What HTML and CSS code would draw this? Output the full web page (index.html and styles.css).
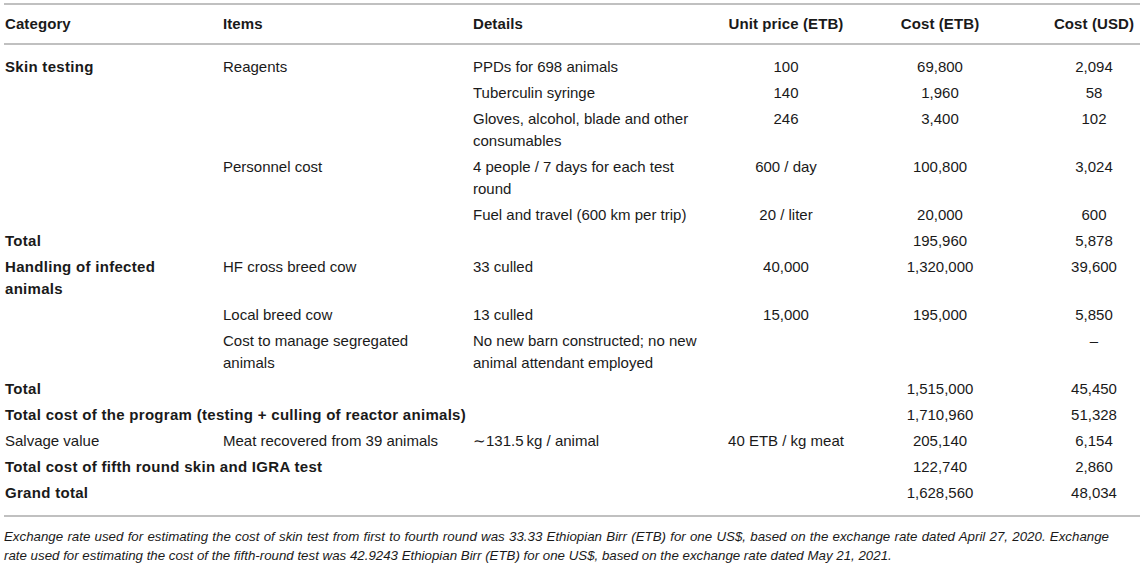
FILE: index.html
```html
<!DOCTYPE html>
<html lang="en">
    <head>
        <meta charset="UTF-8">
        <meta name="viewport" content="width=device-width, initial-scale=1.0">
        <title>Cost of the test and slaughter program</title>
        <link rel="stylesheet" href="styles.css">
    </head>
    <body>
        <div class="wrap">
            <table class="costs">
                <colgroup>
                    <col class="c-cat">
                    <col class="c-item">
                    <col class="c-detail">
                    <col class="c-unit">
                    <col class="c-etb">
                    <col class="c-usd">
                </colgroup>
                <thead>
                    <tr>
                        <th>Category</th>
                        <th>Items</th>
                        <th>Details</th>
                        <th class="num">Unit price (ETB)</th>
                        <th class="num">Cost (ETB)</th>
                        <th class="num usd">Cost (USD)</th>
                    </tr>
                </thead>
                <tbody>
                    <tr>
                        <td class="cat">Skin testing</td>
                        <td>Reagents</td>
                        <td>PPDs for 698 animals</td>
                        <td class="num">100</td>
                        <td class="num">69,800</td>
                        <td class="num usd">2,094</td>
                    </tr>
                    <tr>
                        <td></td>
                        <td></td>
                        <td>Tuberculin syringe</td>
                        <td class="num">140</td>
                        <td class="num">1,960</td>
                        <td class="num usd">58</td>
                    </tr>
                    <tr>
                        <td></td>
                        <td></td>
                        <td>Gloves, alcohol, blade and other consumables</td>
                        <td class="num">246</td>
                        <td class="num">3,400</td>
                        <td class="num usd">102</td>
                    </tr>
                    <tr>
                        <td></td>
                        <td>Personnel cost</td>
                        <td>4 people / 7 days for each test round</td>
                        <td class="num">600 / day</td>
                        <td class="num">100,800</td>
                        <td class="num usd">3,024</td>
                    </tr>
                    <tr>
                        <td></td>
                        <td></td>
                        <td>Fuel and travel (600 km per trip)</td>
                        <td class="num">20 / liter</td>
                        <td class="num">20,000</td>
                        <td class="num usd">600</td>
                    </tr>
                    <tr>
                        <td class="cat">Total</td>
                        <td></td>
                        <td></td>
                        <td></td>
                        <td class="num">195,960</td>
                        <td class="num usd">5,878</td>
                    </tr>
                    <tr>
                        <td class="cat">Handling of infected animals</td>
                        <td>HF cross breed cow</td>
                        <td>33 culled</td>
                        <td class="num">40,000</td>
                        <td class="num">1,320,000</td>
                        <td class="num usd">39,600</td>
                    </tr>
                    <tr>
                        <td></td>
                        <td>Local breed cow</td>
                        <td>13 culled</td>
                        <td class="num">15,000</td>
                        <td class="num">195,000</td>
                        <td class="num usd">5,850</td>
                    </tr>
                    <tr>
                        <td></td>
                        <td>Cost to manage segregated animals</td>
                        <td>No new barn constructed; no new animal attendant employed</td>
                        <td class="num"></td>
                        <td class="num"></td>
                        <td class="num usd">&ndash;</td>
                    </tr>
                    <tr>
                        <td class="cat">Total</td>
                        <td></td>
                        <td></td>
                        <td></td>
                        <td class="num">1,515,000</td>
                        <td class="num usd">45,450</td>
                    </tr>
                    <tr>
                        <td class="cat" colspan="3">Total cost of the program (testing + culling of reactor animals)</td>
                        <td></td>
                        <td class="num">1,710,960</td>
                        <td class="num usd">51,328</td>
                    </tr>
                    <tr>
                        <td>Salvage value</td>
                        <td>Meat recovered from 39 animals</td>
                        <td>&sim;131.5&#8201;kg / animal</td>
                        <td class="num">40 ETB / kg meat</td>
                        <td class="num">205,140</td>
                        <td class="num usd">6,154</td>
                    </tr>
                    <tr>
                        <td class="cat" colspan="3">Total cost of fifth round skin and IGRA test</td>
                        <td></td>
                        <td class="num">122,740</td>
                        <td class="num usd">2,860</td>
                    </tr>
                    <tr>
                        <td class="cat">Grand total</td>
                        <td></td>
                        <td></td>
                        <td></td>
                        <td class="num">1,628,560</td>
                        <td class="num usd">48,034</td>
                    </tr>
                </tbody>
            </table>

            <p class="note">Exchange rate used for estimating the cost of skin test from first to fourth round was 33.33 Ethiopian Birr (ETB) for one US$, based on the exchange rate dated April 27, 2020. Exchange rate used for estimating the cost of the fifth-round test was 42.9243 Ethiopian Birr (ETB) for one US$, based on the exchange rate dated May 21, 2021.</p>
        </div>
    </body>
</html>
```

FILE: styles.css
```css
* {
    box-sizing: border-box;
}

body {
    margin: 0;
    background: #fff;
    color: #1a1a1a;
    font-family: "Liberation Sans", Arial, sans-serif;
}

.wrap {
    width: 1136px;
    margin: 3px 0 0 4px;
}

table.costs {
    width: 1136px;
    table-layout: fixed;
    border-collapse: collapse;
    border-top: 2px solid #c0c0c0;
    border-bottom: 2px solid #c0c0c0;
    font-size: 15px;
    line-height: 22px;
}

col.c-cat    { width: 218px; }
col.c-item   { width: 250px; }
col.c-detail { width: 255px; }
col.c-unit   { width: 118px; }
col.c-etb    { width: 190px; }
col.c-usd    { width: 105px; }

thead {
    border-bottom: 2px solid #c0c0c0;
}

th {
    font-weight: 700;
    text-align: left;
    padding: 8px 14px 8px 1px;
    vertical-align: top;
    letter-spacing: 0.1px;
}

td {
    padding: 2px 14px 2px 1px;
    vertical-align: top;
}

td.cat {
    font-weight: 700;
    letter-spacing: 0.3px;
}

th.num, td.num {
    text-align: center;
    padding-left: 0;
    padding-right: 0;
    white-space: nowrap;
}

th.usd, td.usd {
    padding-left: 13px;
}

tbody tr:first-child td {
    padding-top: 11px;
}

tbody tr:last-child td {
    padding-bottom: 11px;
}

.note {
    width: 1105px;
    margin: 10px 0 0;
    font-size: 13.3px;
    line-height: 19px;
    font-style: italic;
    text-align: justify;
}
```
